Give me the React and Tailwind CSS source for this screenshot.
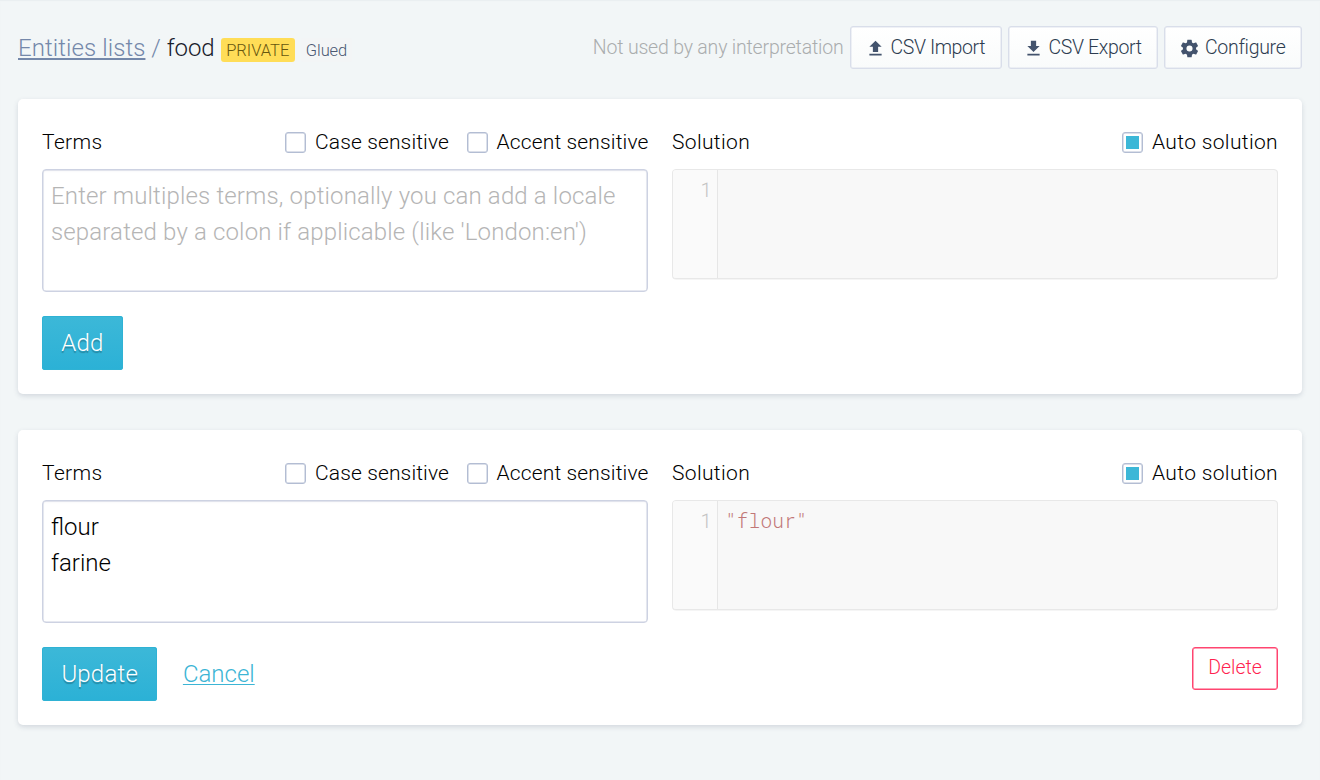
const icons = {
  upload: "M9 16h6v-6h4l-7-7-7 7h4v6zm-4 2h14v2H5z",
  download: "M5 20h14v-2H5v2M19 9h-4V3H9v6H5l7 7 7-7z",
  cog: "M12 15.5A3.5 3.5 0 0 1 8.5 12A3.5 3.5 0 0 1 12 8.5a3.5 3.5 0 0 1 3.5 3.5a3.5 3.5 0 0 1-3.5 3.5m7.43-2.53c.04-.32.07-.64.07-.97c0-.33-.03-.66-.07-1l2.11-1.63c.19-.15.24-.42.12-.64l-2-3.46c-.12-.22-.39-.31-.61-.22l-2.49 1c-.52-.39-1.06-.73-1.69-.98l-.37-2.65A.506.506 0 0 0 14 2h-4c-.25 0-.46.18-.5.42l-.37 2.65c-.63.25-1.17.59-1.69.98l-2.49-1c-.22-.09-.49 0-.61.22l-2 3.46c-.13.22-.07.49.12.64L4.57 11c-.04.34-.07.67-.07 1c0 .33.03.65.07.97l-2.11 1.66c-.19.15-.25.42-.12.64l2 3.46c.12.22.39.3.61.22l2.49-1.01c.52.4 1.06.74 1.69.99l.37 2.65c.04.24.25.42.5.42h4c.25 0 .46-.18.5-.42l.37-2.65c.63-.26 1.17-.59 1.69-.99l2.49 1.01c.22.08.49 0 .61-.22l2-3.46c.12-.22.07-.49-.12-.64z",
};

function ToolButton({ icon, label, width, tracking }) {
  return (
    <button
      className={`${width} flex h-[43px] items-center gap-[5px] rounded-[3px] border border-[#d9deea] bg-linear-to-b from-white to-[#f9fbfb] pl-[14px] text-[19.5px] text-[#2d3c50] shadow-[inset_0_0_0_0.5px_#dfe3ed]`}
    >
      <svg viewBox="0 0 24 24" className="mt-px size-[21px] shrink-0 fill-[#43536d]">
        <path d={icons[icon]} />
      </svg>
      <span className={`${tracking} whitespace-nowrap`}>{label}</span>
    </button>
  );
}

function Check({ label, checked, width, tracking }) {
  return (
    <label className={`${width} flex items-center gap-[9px]`}>
      <span className="flex size-[21px] shrink-0 items-center justify-center rounded-[3px] border border-[#b3bdd3] bg-white shadow-[inset_0_0_0_0.5px_#b9c2d6]">
        {checked && <span className="mt-px size-[13px] bg-[#3cb7d7]" />}
      </span>
      <span className={`${tracking} pt-px whitespace-nowrap`}>{label}</span>
    </label>
  );
}

function Card({ terms, placeholder, solution, children }) {
  return (
    <section className="h-[295px] rounded-[5px] bg-white px-6 pt-[27px] shadow-[0_2px_5px_rgba(60,70,100,0.17)]">
      <div className="grid grid-cols-2 gap-6">
        <div>
          <div className="flex h-8 items-center text-[21px] text-black">
            <span className="pt-px tracking-[0.35px]">Terms</span>
            <div className="ml-auto flex gap-[18.5px]">
              <Check label="Case sensitive" width="w-[163px]" tracking="tracking-[0.13px]" />
              <Check label="Accent sensitive" width="w-[181.5px]" tracking="tracking-[0.14px]" />
            </div>
          </div>
          <textarea
            className="mt-[11px] block h-[123px] w-full resize-none rounded-[4px] border border-[#cdd2e2] bg-white px-2 py-[8px] text-[24px] leading-9 text-black shadow-[inset_0_0_0_0.5px_#cdd2e2,inset_0_1px_2px_rgba(60,70,100,0.08)] outline-none placeholder:tracking-[0.15px] placeholder:text-[#b5b5b5]"
            placeholder={placeholder}
            defaultValue={terms}
          />
        </div>
        <div>
          <div className="flex h-8 items-center justify-between text-[21px] text-black">
            <span className="pt-px tracking-[0.35px]">Solution</span>
            <Check label="Auto solution" checked width="w-[156px]" tracking="tracking-[0.35px]" />
          </div>
          <div className="mt-[11px] flex h-[110px] overflow-hidden rounded-[4px] border border-[#e8e8e8] bg-[#f8f8f8] font-['Roboto_Mono','Liberation_Mono',monospace] text-[19.5px] leading-[30px] shadow-[0_0.5px_0_#ececec]">
            <div className="w-[45px] border-r border-[#e6e6e6] bg-[#fafafa] pt-[5px] pr-[5px] text-right text-[#c3c3c3]">1</div>
            <div className="pt-[5px] pl-[7px] tracking-[0.1px] text-[#c17777]">{solution}</div>
          </div>
        </div>
      </div>
      <div className="mt-6 flex items-start">{children}</div>
    </section>
  );
}

function Primary({ label, width }) {
  return (
    <button
      className={`${width} h-[54px] rounded-[3px] bg-linear-to-b from-[#3cb8d8] to-[#2bb1d6] text-[24px] tracking-[0.2px] text-white shadow-[inset_0_0_0_1px_#2fb2d4] [text-shadow:0_1.5px_1px_rgba(0,0,0,0.25)]`}
    >
      {label}
    </button>
  );
}

export default function App() {
  return (
    <main className="h-[780px] overflow-hidden bg-[#f2f6f7] px-[18px] pt-[26px] font-['Roboto',sans-serif] font-light shadow-[inset_0_1px_1px_rgba(60,70,100,0.04)]">
      <header className="flex h-[43px] items-center">
        <h1 className="flex items-center text-[24px] whitespace-pre text-[#7488aa]">
          <a className="tracking-[0.08px] underline decoration-2 underline-offset-2">Entities lists</a>
          <span>{" / "}</span>
          <span className="tracking-[-0.1px] text-[#18202b]">food</span>
        </h1>
        <span className="mt-[5px] ml-1.5 flex h-6 w-[74.5px] items-center justify-center rounded-[3px] bg-[#ffdd57] pt-0.5 text-[16.5px] text-[#66560f]">PRIVATE</span>
        <span className="mt-[5px] ml-1.5 flex h-6 w-[51px] items-center justify-center rounded-[3px] bg-[#f3f5f6] pt-0.5 text-[16.5px] tracking-[-0.1px] text-[#4a5872]">Glued</span>
        <div className="ml-auto flex items-center gap-1.5">
          <span className="text-[19.5px] tracking-[-0.19px] text-[#aaadae]">Not used by any interpretation</span>
          <ToolButton icon="upload" label="CSV Import" width="w-[152px]" tracking="tracking-[-0.4px]" />
          <ToolButton icon="download" label="CSV Export" width="w-[150.5px]" tracking="tracking-[-0.35px]" />
          <ToolButton icon="cog" label="Configure" width="w-[138px]" tracking="tracking-[-0.3px]" />
        </div>
      </header>
      <div className="mt-[30px] flex flex-col gap-9">
        <Card placeholder="Enter multiples terms, optionally you can add a locale separated by a colon if applicable (like 'London:en')">
          <Primary label="Add" width="w-[81px]" />
        </Card>
        <Card terms={"flour\nfarine"} solution={'"flour"'}>
          <Primary label="Update" width="w-[115.4px]" />
          <a className="ml-[25.5px] text-[24px] leading-[54px] text-[#3cb5d5] underline decoration-1 underline-offset-2">Cancel</a>
          <button className="ml-auto h-[43px] w-[86px] rounded-[3px] border border-[#ff4570] bg-white pb-px text-[19.5px] tracking-[-0.05px] text-[#ff1f50] shadow-[inset_0_0_0_0.5px_#ff4570]">Delete</button>
        </Card>
      </div>
    </main>
  );
}
